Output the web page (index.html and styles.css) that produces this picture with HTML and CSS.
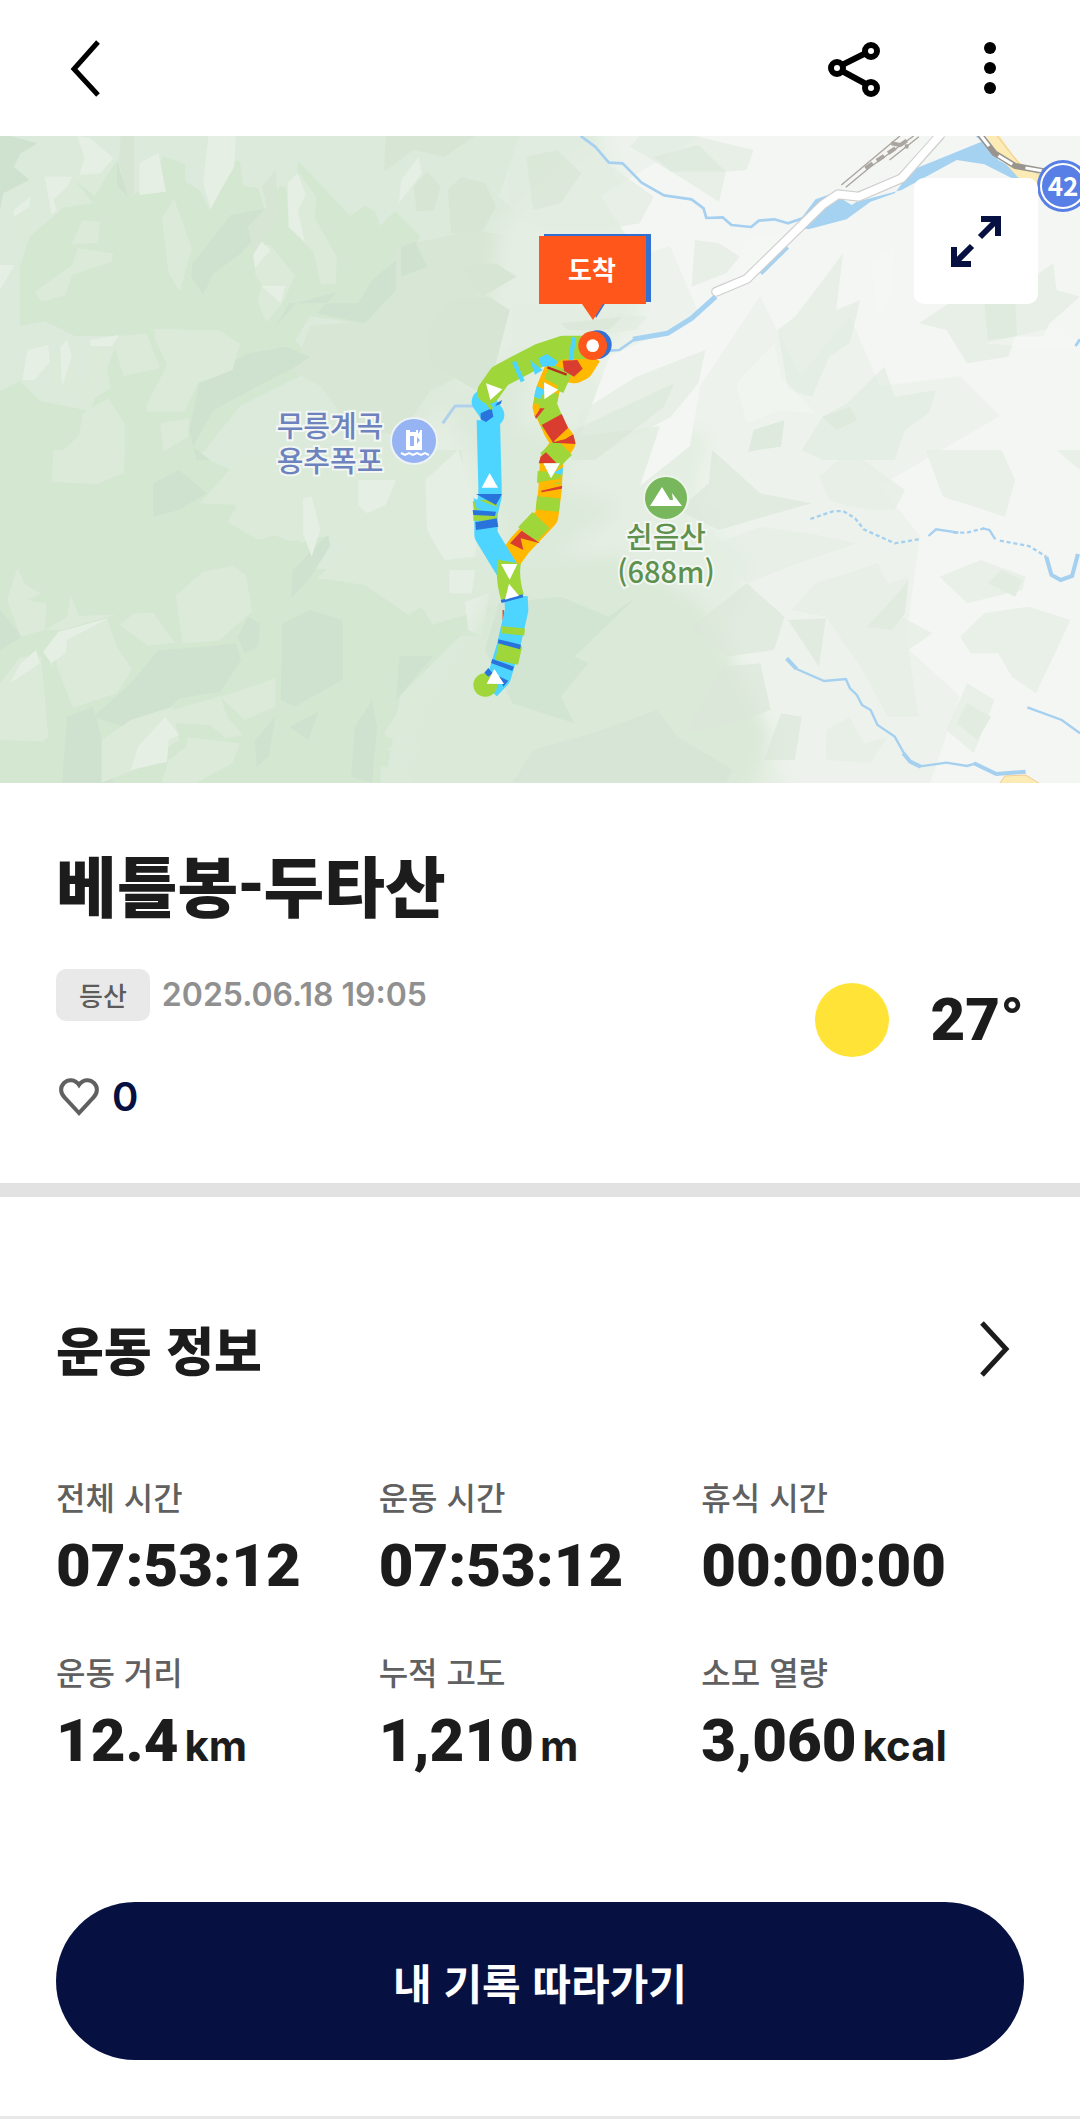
FILE: index.html
```html
<!DOCTYPE html>
<html lang="ko">
<head>
<meta charset="utf-8">
<meta name="viewport" content="width=device-width, initial-scale=1">
<title>베틀봉-두타산</title>
<link rel="stylesheet" href="styles.css">
</head>
<body>
<header class="topbar">
  <button class="icon-button" type="button" aria-label="뒤로">
    <svg class="icon" viewBox="0 0 60 60"><path d="M42 4 18 31 42 57" fill="none" stroke="#000" stroke-width="5"/></svg>
  </button>
  <div class="topbar-actions">
    <button class="icon-button" type="button" aria-label="공유">
      <svg class="icon" viewBox="0 0 60 60" fill="none" stroke="#000" stroke-width="6"><path d="M18 27 42 15M18 33 42 46"/><circle cx="47" cy="13" r="6"/><circle cx="13" cy="30" r="6"/><circle cx="47" cy="50" r="6"/></svg>
    </button>
    <button class="icon-button" type="button" aria-label="더보기">
      <svg class="icon" viewBox="0 0 60 60"><circle cx="30" cy="10" r="6"/><circle cx="30" cy="30" r="6"/><circle cx="30" cy="50" r="6"/></svg>
    </button>
  </div>
</header>

<main>
<section class="map" aria-label="경로 지도">
<svg class="map-canvas" viewBox="0 0 1080 647">
  <defs>
    <filter id="soft"><feGaussianBlur stdDeviation="9"/></filter>
  </defs>
  <rect width="1080" height="647" fill="#d3e7d1"/>
  <!-- pale lowland to the east -->
  <g>
    <path fill="#dceadb" d="M0 0H1080V647H385L400 560 460 500 520 500 490 450 440 470 430 460 405 465 365 435 315 433 330 400 290 405 250 390 232 365 245 340 200 320 240 270 290 245 320 230 295 205 310 180 365 188 400 150 420 100 395 75 380 90 375 75 365 70 350 80 298 25 297 55 280 50 265 75 258 52 243 50 240 25 235 25 210 75 200 55 185 45 185 28 163 20 150 50 130 60 116 25 95 60 76 45 60 75 30 100 20 130 20 190 45 185 75 200 120 200 90 275 40 265 20 245 0 255Z"/>
    <path fill="#d8e6d5" d="M370 160 400 110 470 95 520 100 530 150 480 230 430 255 400 300 350 290 320 250 293 235 310 190 365 185Z"/>
    <path fill="#e4eee2" filter="url(#soft)" d="M500 90 560 30 650 -30 700 -30H1110V677H740L700 600 670 520 700 480 640 440 560 420 620 370 560 350 580 300 520 290 530 210 500 230 440 270 480 330 500 400 470 410 420 370 430 280 480 230Z"/>
    <path fill="#edf3ec" filter="url(#soft)" d="M590 -30H1110V677H800L745 570 720 500 750 430 690 370 710 300 640 280 590 230 640 180 630 80Z"/>
    <path fill="#f4f6f4" d="M700 0H1080V647H930L960 560 905 510 920 400 880 350 1000 280 960 240 880 250 850 180 800 240 760 160 700 250 690 310 640 350 660 290 580 300 610 220 700 180 670 110 640 120 600 60Z"/>
  </g>
  <!-- hillshade, north west -->
  <g transform="translate(0 -6) scale(.3444 .3333)">
    <g fill="#cfe2cf"><path d="M30 18 110 40 60 70 40 110 85 150 10 190 0 240V18ZM560 400 670 255 775 235 720 290 740 325 700 370 620 430 590 495 555 440ZM340 85 350 130 375 155 370 200 340 165ZM800 590 860 520 980 485 920 550 1060 580 1150 480 1150 390 1080 450 1040 520 840 520ZM720 670 830 650 900 680 850 715 800 740 620 840 560 950 610 990 570 990 550 900 580 750ZM1165 350 1205 335 1240 410 1165 440Z"/></g>
    <g fill="#d7e6d4"><path d="M350 18H390V190L370 200 345 100ZM1120 18H1380L1290 80 1200 60 1115 125ZM1200 170 1240 125 1280 170 1260 240 1210 245ZM1300 180 1340 140 1410 160 1440 230 1400 305 1310 310ZM1340 410 1440 400 1500 440 1400 500ZM1240 600 1310 505 1420 500 1480 540 1440 700 1380 780 1250 700ZM740 380 810 250 800 120 760 170 775 230 720 290Z"/></g>
    <g fill="#dceada"><path d="M230 20 330 85 275 200 215 130ZM125 140 210 140 270 220 130 240ZM240 270 290 275 285 340 208 342ZM225 355 328 370 325 395 210 435 190 495 120 515 100 485 210 405ZM505 205 470 265 490 430 522 485 557 355ZM830 165 870 130 918 200 915 265 978 380 975 460 932 465 910 365 840 295ZM750 345 785 345 857 437 820 520 773 577 748 515 760 465 740 430ZM450 597 635 600 697 642 675 720 575 760 535 845 425 845 425 825 485 705 447 620ZM325 620 425 610 465 715 358 738ZM262 640 302 648 320 775 238 830ZM315 805 362 880V990H155L230 915 240 850ZM465 880 550 865 545 920 475 965ZM150 670 200 640 232 800 155 760ZM30 230 95 195 90 290 68 350 35 300Z"/></g>
    <g fill="#e5efe4"><path d="M605 18H685L680 110 625 210 612 235 590 160ZM225 18 262 25 330 85 290 130 230 135 245 85ZM405 100 460 68 482 185 405 195ZM130 140 210 140 195 170 155 210 165 240 150 255ZM835 160 865 130 888 195 865 240 885 335 838 290ZM1165 150 1215 80 1225 130 1158 220ZM735 375 760 335 785 360 740 415ZM760 468 828 468 815 520ZM80 660 140 645 145 695 100 750 65 750ZM175 650 195 630 208 680 180 770ZM262 630 345 615 325 648H262ZM0 405 42 405 0 480ZM40 240 90 198 85 230 40 260Z"/></g>
  </g>
  <!-- hillshade, south west -->
  <g transform="translate(0 314) scale(.3444 .3333)">
    <g fill="#cfe2cf"><path d="M460 600 600 590 685 580 700 630 640 725 520 745 420 850 270 800 380 700ZM820 520 900 480 995 510V690L855 770 815 750ZM1160 618H1258L1150 750ZM195 800 270 770 330 998H180ZM1030 830 1080 750 1095 830 1080 998 1020 980ZM445 100 520 60 600 130 520 180 445 200ZM720 500 755 520 750 590 710 610 690 560ZM740 870 800 800 780 920 745 950ZM0 480 65 560 0 600ZM850 360 950 255 960 285 900 385 845 445ZM840 830 925 785 895 870Z"/></g>
    <g fill="#dceada"><path d="M155 0H362L360 70 280 103 150 95ZM510 437 590 365 675 347 715 375 732 485 635 572 530 580ZM347 525 390 490 445 487 508 578 430 587ZM165 550 310 505 340 590 383 658 340 730 212 773 165 650ZM50 355 75 405 120 430 80 450 135 460 130 540 60 560 20 450ZM205 435 230 498 340 493 180 540 130 540 195 500ZM640 740 800 685V770L710 810ZM500 780 640 738 660 800 705 855 655 865 610 825 510 820ZM545 862 697 880 675 940 570 998 470 998 490 930 540 890ZM120 620 140 860 125 875 0 870V700L60 620ZM1200 715 1310 715 1380 730 1240 850 1130 865 1115 850ZM1120 900 1180 870 1330 862 1343 960 1240 925ZM1105 950 1200 948 1190 998H1105ZM580 160 700 20 1040 0 1340 0 1370 330 1460 460 1255 525 1225 470 1185 495 1060 405 920 385 1010 300 935 240 880 280 820 250 750 270 660 215 690 165ZM380 810 500 770 520 870 390 960 295 998V870Z"/></g>
    <g fill="#e5efe4"><path d="M1235 90 1330 0 1390 200 1380 320 1290 330 1240 240ZM1040 90 1150 90 1120 165 1065 190 1040 165ZM880 145 905 140 930 240 905 320 880 250ZM125 605 170 545 315 505 195 570 190 610 150 640 165 665ZM400 890 480 800 520 855 490 870 485 935 380 960ZM1305 360 1380 360 1370 430 1305 430ZM1350 455 1420 430 1400 560 1360 540ZM1255 820 1310 730 1345 760 1310 825ZM30 700 60 640 105 600 115 640Z"/></g>
  </g>
  <!-- hillshade, north east -->
  <g transform="translate(540 -6) scale(.3444 .3333)" opacity=".75">
    <g fill="#e3ede2"><path d="M-60 18H120L195 100 330 200 290 280 180 300 0 300 -120 200ZM290 18H450L620 60 600 120 540 125 520 215 420 150 310 80 260 50ZM450 330 520 340 580 380 540 430 440 470ZM-80 520 310 560 280 600 120 620 -80 640ZM1260 470 1300 440 1420 450 1490 400 1500 480 1568 500 1480 580 1460 620 1380 620 1360 680 1240 700 1180 600 1100 580ZM740 560 800 480 880 370 860 540 930 510 900 640 840 680 790 800 720 780 690 600ZM820 860 890 820 1000 710 1030 800 1150 780 1130 850 1060 900 1030 990H820L760 960ZM280 740 480 660 460 760 380 860 200 960 120 930 110 850Z"/></g>
    <g fill="#dae8d8"><path d="M-40 80 50 60 120 130 60 220 -20 240ZM330 80 460 45 540 125 380 125ZM60 580 240 560 200 600 80 600ZM100 900 390 760 360 830 160 990H90ZM620 900 710 870 700 950 605 965ZM1290 510 1380 520 1385 620 1300 630ZM820 860 900 830 920 870 860 900Z"/></g>
    <g fill="#f8faf8" opacity=".5"><path d="M570 760 680 640 700 740 800 850 700 840 600 880ZM960 400 1030 350 1020 500 980 560ZM1290 640 1500 590 1568 640 1500 660ZM600 330 740 300 640 460 560 440Z"/></g>
  </g>
  <!-- deep forest south of the track -->
  <path fill="#dae9d8" filter="url(#soft)" d="M500 440 620 420 700 470 740 540 770 600 740 680H400L420 590 470 500Z"/>
  <!-- hillshade, south east -->
  <g transform="translate(540 314) scale(.3444 .3333)" opacity=".7">
    <g fill="#e5eee4"><path d="M900 0 1060 120 1030 180 960 180 900 170 840 150 810 80ZM1120 0H1340L1380 90 1350 200 1170 140ZM1160 380 1280 330 1410 380 1400 420 1240 460ZM1220 560 1290 490 1420 470 1540 510 1500 600 1440 730 1370 680 1330 610 1250 610ZM1240 700 1320 750 1260 910 1180 840ZM920 360 980 340 1010 400 1070 380 1050 500 1140 550 1070 600 1100 800H1010L930 650 830 500 730 480 800 400ZM510 280 640 230 780 250 920 280 750 340 600 400ZM830 840 900 800 940 880 1010 860 960 940 830 930ZM1500 0H1568V60Z"/></g>
    <g fill="#dce8da"><path d="M500 0 640 130 790 160 650 200 520 240 400 180 490 100ZM440 530 600 400 710 500 680 600 540 620ZM530 650 640 640 670 780 560 820 420 850ZM720 510 830 505 810 650ZM650 930 700 790 760 800 740 930ZM950 530 1040 430 1070 390 1060 490 1020 540ZM1210 820 1240 760 1310 800 1270 870ZM1300 400 1340 360 1400 390 1380 440Z"/></g>
    <path fill="#d5e4d4" d="M150 850 340 780 400 860 560 960 540 998H-80L-20 900Z"/>
    <path fill="#d0e3d0" d="M-120 460 60 440 200 500 280 440 100 620 140 640 60 740 100 820 -80 760 -160 600Z"/>
  </g>
  <!-- rivers, roads and railway -->
  <g transform="translate(540 -6) scale(.3444 .3333)" stroke-linejoin="round">
    <path fill="#a6d2f2" d="M1265 18 1282 35 1080 120 1030 190 960 215 890 268 780 298 740 290 800 208 850 190 905 225 920 215 1050 180 1210 90 1290 103 1400 160 1460 160 1330 90 1290 18Z"/>
    <path fill="none" stroke="#a6d0ef" stroke-width="8" d="M118 18 160 50 200 98 240 100 295 158 360 196 440 208 475 235 483 264 530 262 556 285 613 291 635 272 680 268 720 280 790 255"/>
    <path fill="none" stroke="#a6d2f2" stroke-width="15" d="M718 350 640 430M510 500 440 565 370 610 270 628"/>
    <path fill="none" stroke="#a6d0ef" stroke-width="8" d="M280 624 230 660 200 662M1568 628 1555 648"/>
    <path fill="none" stroke="#fdebb5" stroke-width="34" d="M1310 10 1360 85 1400 130 1460 160"/>
    <path fill="none" stroke="#efcf94" stroke-width="3" d="M1325 14 1390 100 1460 140"/>
    <path fill="none" stroke="#aaa69f" stroke-width="4" d="M875 165 1045 18M888 172 960 110 1085 18M1015 90 1100 20"/>
    <path fill="none" stroke="#aaa69f" stroke-width="12" stroke-dasharray="26 14" d="M945 115 1075 25M1020 40 1070 50"/>
    <path fill="none" stroke="#99958e" stroke-width="18" d="M1275 10 1320 70 1380 108 1470 125"/>
    <path fill="none" stroke="#fff" stroke-width="9" stroke-dasharray="48 40" d="M1275 10 1320 70 1380 108 1470 125"/>
    <path fill="none" stroke="#cfcfcf" stroke-width="30" stroke-linecap="round" d="M512 485 600 447 820 225 865 193 925 200 1050 145 1160 18"/>
    <path fill="none" stroke="#fff" stroke-width="23" stroke-linecap="round" d="M512 485 600 447 820 225 865 193 925 200 1050 145 1170 5"/>
  </g>
  <g transform="translate(540 314) scale(.3444 .3333)" fill="none" stroke="#a6d0ef" stroke-width="7">
    <path stroke-dasharray="12 8" d="M785 207 850 184 880 183 915 205 940 238 1030 280 1105 267M1200 248 1240 248 1290 235M1335 272 1420 288 1470 320"/>
    <path d="M1128 258 1150 238 1215 248M1285 235 1305 240 1322 268"/>
    <path stroke-width="12" d="M1470 320 1485 375 1512 390 1545 378 1562 312"/>
    <path stroke-width="12" d="M716 625 745 657M1055 910 1075 935 1105 950M1260 940 1325 972 1410 965"/>
    <path d="M745 657 825 693 888 687 900 715 920 735 935 765 960 780 980 825 1030 860 1058 912M1100 950 1180 938 1240 948 1265 940M1415 772 1515 810 1568 850" />
    <path fill="#fdebb5" stroke="#efcf94" stroke-width="3" d="M1335 1000 1350 978 1410 975 1450 1000"/>
  </g>
  <!-- recorded track, coloured by speed -->
  <g transform="translate(440 164) scale(.33333)" fill="none" stroke-width="70" stroke-linejoin="round">
    <path stroke="#b0d1ee" stroke-width="9" d="M8 370 45 318H105"/>
    <path stroke="#e74c35" stroke-width="5" d="M190 930V960"/>
    <path stroke="#ffb900" d="M450 165 425 205 405 215 345 205M350 205 325 265 313 320 345 390 370 430 335 480 330 570 320 650 240 735 200 790"/>
    <g stroke="#9fd63a">
      <path d="M365 205 338 265M322 275 315 315 340 375M372 440 325 485M328 515 326 550M326 592 322 632M303 660 260 705"/>
    </g>
    <path fill="#d93d30" stroke="none" d="M368 182 412 180 428 206 402 230 372 212ZM305 375 365 342 385 385 340 430ZM296 490 302 470 318 457 350 490ZM283 345 300 325 314 325 288 357ZM210 730 245 692 300 730 242 715 250 750ZM340 428 400 403 407 432ZM303 572 367 557 365 566 305 577Z"/>
    <path fill="#ffb900" stroke="none" d="M340 425 385 383 400 402 375 418ZM300 545 362 536 362 546 300 559ZM280 310 296 312 298 330 285 350 278 325ZM312 235 355 258 350 266 305 245Z"/>
    <path fill="#50d6ff" stroke="none" d="M290 258 315 270 300 298 282 290ZM370 502 367 525 340 518Z"/>
    <path stroke="#4dd5ff" d="M145 360 150 560V590L138 640V705L205 815M228 890 230 930 205 1040 178 1130 145 1165"/>
    <path stroke="#4dd5ff" stroke-linecap="round" d="M130 305 158 345"/>
    <path stroke="#9fd63a" stroke-linecap="round" d="M146 276 180 228 300 165 370 142 455 142"/>
    <path stroke="#9fd63a" d="M208 785C202 820 206 855 218 893M220 982 218 1003M212 1033 200 1087M133 600 136 626M135 640V662"/>
    <path stroke="#9fd63a" stroke-linecap="round" d="M135 1155h2"/>
    <path stroke="#4dd5ff" stroke-width="13" d="M222 185 248 244M402 112 392 180"/>
    <path fill="#4dd5ff" stroke="none" d="M270 180 308 210 285 224ZM295 175 320 162 355 185 345 198 305 200ZM100 595 170 620 168 635 110 625Z"/>
    <g fill="#2874dc" stroke="none"><path d="M108 582H186L168 615ZM98 630 168 635 165 648 100 645ZM106 667 170 655 175 680 108 690ZM122 340 155 325 160 350 138 366 122 358ZM172 308 186 300 182 312 165 318ZM182 900 248 883 250 892 185 909ZM175 1018 243 1034 240 1048 174 1030ZM157 1077 222 1100 217 1113 153 1089ZM145 1104 158 1120 145 1130 133 1118ZM175 1128 205 1142 190 1160Z"/></g>
    <path stroke="#9fd63a" stroke-width="10" d="M128 292 156 327"/>
    <path stroke="#b82e20" stroke-width="7" d="M322 202 380 224"/>
    <path fill="#fff" stroke="none" d="M138 250 187 268 151 300ZM312 247 355 269 313 298ZM149 519 174 563H125ZM310 490H360L333 535ZM183 792H232L209 839ZM207 851 237 887 195 899ZM163 1107 192 1152 140 1151Z"/>
    <circle cx="472" cy="134" r="43" fill="#3271d1" stroke="none"/><circle cx="458" cy="137" r="43" fill="#ff571b" stroke="none"/><circle cx="458" cy="137" r="19" fill="#fff" stroke="none"/>
  </g>
  <!-- finish flag -->
  <path fill="#3271d1" d="M544 98H651V166H606L596 182 590 166H544Z"/>
  <path fill="#ff571b" d="M539 100H646V168H603L593 184 582 168H539Z"/>
  <text class="map-label map-label-small" x="592" y="144" fill="#fff">도착</text>
  <!-- places -->
  <g class="map-place">
    <text class="map-label" fill="#6e83bd"><tspan x="330" y="301">무릉계곡</tspan><tspan x="330" y="336">용추폭포</tspan></text>
    <text class="map-label" fill="#5f914e"><tspan x="666" y="412">쉰음산</tspan><tspan x="666" y="447">(688m)</tspan></text>
  </g>
  <circle cx="414" cy="305" r="23" fill="#96b3f3" stroke="#edf2f5" stroke-width="2"/>
  <path fill="#fff" fill-rule="evenodd" d="M406 294H410V296H416V294H418V298L420 295V294H422V314H406ZM410 300V310H414V300ZM417 301V308L420 304Z"/>
  <path fill="none" stroke="#fff" stroke-width="2" d="m401 317 4 2 4-2 4 2 4-2 4 2 4-2 4 2"/>
  <circle cx="666" cy="362" r="22" fill="#78b75b" stroke="#edf4ea" stroke-width="2"/>
  <path fill="#fff" d="M650 370 662 351 670 364 673 364 672 357 682 370Z"/>
  <circle cx="1063" cy="50" r="26" fill="#587fe5"/><circle cx="1063" cy="50" r="22" fill="none" stroke="#fff" stroke-width="2"/>
  <text class="map-label map-label-small" x="1063" y="60" fill="#fff">42</text>
</svg>
<button class="expand" type="button" aria-label="지도 확대">
  <svg class="expand-icon" viewBox="0 0 60 60" fill="none" stroke="#061142" stroke-width="6"><path d="M35 8H52V25M51 9 34 26M25 53H8V36M9 52 26 35"/></svg>
</button>
</section>

<section class="summary">
  <h1 class="title">베틀봉-두타산</h1>
  <div class="summary-row">
    <div class="summary-meta">
      <div class="activity"><span class="badge">등산</span><time class="date" datetime="2025-06-18T19:05">2025.06.18 19:05</time></div>
      <button class="like" type="button" aria-label="좋아요">
        <svg class="heart" viewBox="0 0 44 44"><path d="M23 38 9 23C4 18 4 12 8 8S19 4 23 10C27 4 34 4 38 8S42 18 37 23Z" fill="none" stroke="#606060" stroke-width="4"/></svg>
        <span>0</span>
      </button>
    </div>
    <div class="weather"><span class="sun" role="img" aria-label="맑음"></span><span>27°</span></div>
  </div>
</section>

<section class="workout">
  <a class="workout-head" href="#details">
    <h2 class="section-title">운동 정보</h2>
    <svg class="icon" viewBox="0 0 60 60"><path d="M18 4 42 30 18 56" fill="none" stroke="#1c1c1c" stroke-width="5"/></svg>
  </a>
  <dl class="stats" id="details">
    <div class="stat"><dt>전체 시간</dt><dd>07:53:12</dd></div>
    <div class="stat"><dt>운동 시간</dt><dd>07:53:12</dd></div>
    <div class="stat"><dt>휴식 시간</dt><dd>00:00:00</dd></div>
    <div class="stat"><dt>운동 거리</dt><dd>12.4<span class="unit">km</span></dd></div>
    <div class="stat"><dt>누적 고도</dt><dd>1,210<span class="unit">m</span></dd></div>
    <div class="stat"><dt>소모 열량</dt><dd>3,060<span class="unit">kcal</span></dd></div>
  </dl>
  <button class="follow" type="button">내 기록 따라가기</button>
</section>
</main>
</body>
</html>
```

FILE: styles.css
```css
* { box-sizing: border-box; }

body {
  margin: 0;
  background: #fff;
  color: #1c1c1c;
  font-family: "Noto Sans CJK KR", sans-serif;
}

button {
  margin: 0;
  padding: 0;
  border: 0;
  background: none;
  color: inherit;
  font: inherit;
  cursor: pointer;
}

svg { display: block; }

.topbar {
  display: flex;
  align-items: center;
  justify-content: space-between;
  height: 136px;
  padding: 0 60px 0 56px;
}

.topbar-actions { display: flex; gap: 76px; }
.icon { width: 60px; height: 60px; }

.map { position: relative; overflow: hidden; }
.map-canvas { width: 100%; height: auto; }

.map-label {
  font: 500 29px "Noto Sans CJK KR", sans-serif;
  text-anchor: middle;
}
.map-label-small { font-size: 26px; font-weight: 700; }
.map-place { paint-order: stroke; stroke: #f3f7f3; stroke-width: 4px; }

.expand {
  position: absolute;
  top: 42px;
  right: 42px;
  display: grid;
  place-items: center;
  width: 124px;
  height: 126px;
  border-radius: 10px;
  background: #fff;
}
.expand-icon { width: 60px; height: 60px; }

.summary {
  padding: 60px 56px 58px;
  border-bottom: 14px solid #e2e2e2;
}
.title { margin: 0; font-size: 66px; font-weight: 900; line-height: 80px; }
.summary-row { display: flex; justify-content: space-between; margin-top: 46px; }
.activity { display: flex; align-items: center; gap: 12px; }
.badge {
  padding: 0 23px;
  border-radius: 10px;
  background: #e9e9e9;
  color: #5b5b5b;
  font-size: 26px;
  font-weight: 500;
  line-height: 52px;
}
.date { color: #909090; font: 600 32px/52px Inter, sans-serif; }
.like {
  display: flex;
  align-items: center;
  gap: 12px;
  margin-top: 48px;
  color: #061142;
  font: 600 40px/56px Inter, sans-serif;
}
.heart { width: 44px; height: 44px; }
.weather {
  display: flex;
  align-items: center;
  align-self: flex-start;
  gap: 42px;
  margin-top: 14px;
  font: 900 60px/74px Roboto, sans-serif;
}
.sun { width: 74px; height: 74px; border-radius: 50%; background: #ffe336; }

.workout { padding: 112px 56px 56px; border-bottom: 3px solid #e8e8e8; }
.workout-head {
  display: flex;
  align-items: center;
  justify-content: space-between;
  color: inherit;
  text-decoration: none;
}
.section-title { margin: 0; font-size: 52px; font-weight: 900; line-height: 80px; }
.stats {
  display: grid;
  grid-template-columns: repeat(3, 1fr);
  row-gap: 43px;
  margin: 85px 0 121px;
}
.stat dt { color: #606060; font-size: 32px; font-weight: 500; line-height: 44px; }
.stat dd {
  margin: 8px 0 0;
  font: 900 60px/80px Roboto, sans-serif;
  white-space: nowrap;
}
.unit { margin-left: 6px; font: 700 42px Inter, sans-serif; }
.follow {
  width: 100%;
  height: 158px;
  border-radius: 79px;
  background: #061142;
  color: #fff;
  font-size: 42px;
  font-weight: 700;
}
```
